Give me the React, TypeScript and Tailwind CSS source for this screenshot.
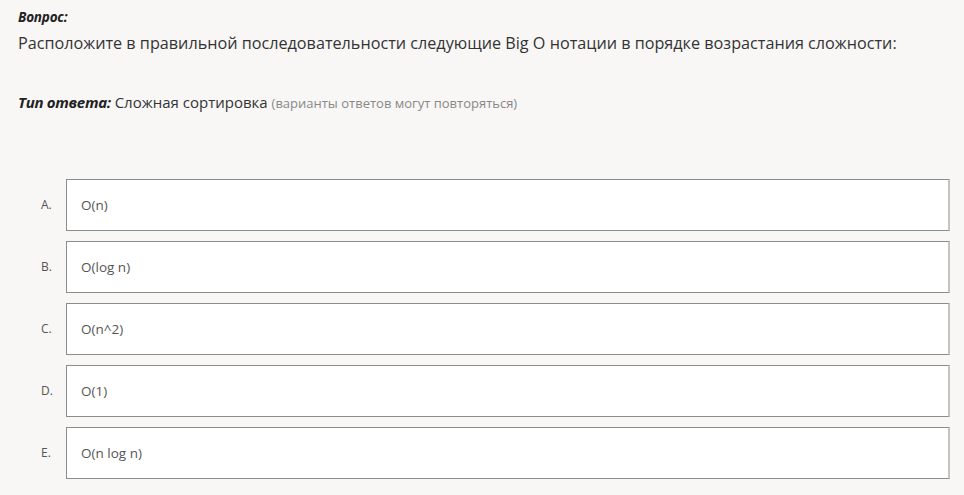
import React from 'react';

const options = [
  { key: 'A', text: 'O(n)' },
  { key: 'B', text: 'O(log n)' },
  { key: 'C', text: 'O(n^2)' },
  { key: 'D', text: 'O(1)' },
  { key: 'E', text: 'O(n log n)' },
];

export default function App() {
  return (
    <div
      className="min-h-[495px] w-[964px] bg-[#f8f7f6] text-[#333] pl-[18px] pr-[14px] pt-[7px]"
      style={{ fontFamily: '"Open Sans", "Noto Sans", sans-serif' }}
    >
      {/* Question */}
      <div className="text-[13.5px] font-bold italic tracking-[-0.2px] text-[#222] leading-[20px]">Вопрос:</div>
      <div className="text-[16.2px] leading-[24px] mt-[4px] text-[#333]">
        Расположите в правильной последовательности следующие Big O нотации в порядке возрастания сложности:
      </div>

      {/* Answer type */}
      <div className="mt-[37px] text-[15px] leading-[20px]">
        <span className="font-bold italic tracking-[-0.3px] text-[#222]">Тип ответа:</span>{' '}
        <span className="text-[#333]">Сложная сортировка</span>{' '}
        <span className="text-[13px] text-[#888]">(варианты ответов могут повторяться)</span>
      </div>

      {/* Options */}
      <div className="mt-[66px] flex flex-col gap-[10px]">
        {options.map((o) => (
          <div key={o.key} className="flex items-center">
            <div className="w-[48px] pl-[23px] text-[12px] text-[#555]">{o.key}.</div>
            <div className="flex-1 h-[52px] bg-white border border-[#8c8c8c] border-r-[#c4c4c4] border-r-2 flex items-center pl-[14px] text-[13.5px] text-[#555]">
              {o.text}
            </div>
          </div>
        ))}
      </div>
    </div>
  );
}
